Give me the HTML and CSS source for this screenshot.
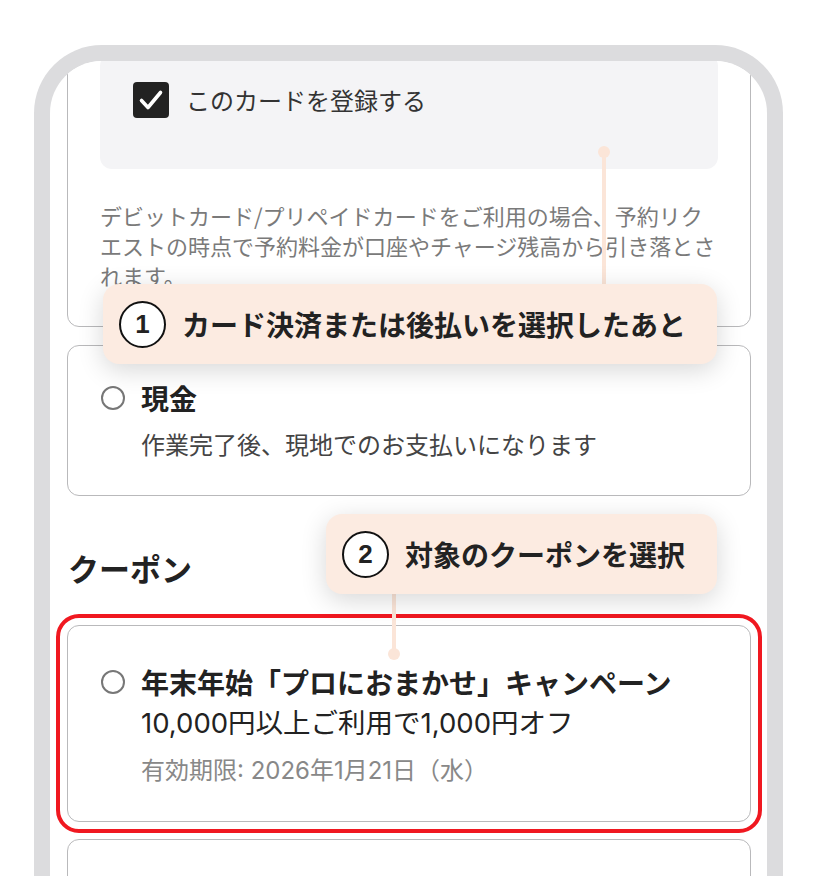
FILE: index.html
```html
<!DOCTYPE html>
<html lang="ja">
<head>
<meta charset="utf-8">
<title>お支払い方法</title>
<link rel="stylesheet" href="styles.css">
</head>
<body>
<div class="phone">
  <div class="screen">
    <div class="card card-first">
      <div class="save-box">
        <label class="check-row">
          <span class="checkbox">
            <svg viewBox="0 0 36 36" width="36" height="36"><path d="M8.5 18.5 L15 25.5 L27.5 10.5" fill="none" stroke="#fff" stroke-width="3.6" stroke-linecap="round" stroke-linejoin="round"/></svg>
          </span>
          <span class="check-label">このカードを登録する</span>
        </label>
      </div>
      <p class="note">デビットカード/プリペイドカードをご利用の場合、予約リクエストの時点で予約料金が口座やチャージ残高から引き落とされます。</p>
    </div>

    <div class="card option">
      <div class="option-head">
        <span class="radio"></span>
        <span class="option-title">現金</span>
      </div>
      <p class="option-sub">作業完了後、現地でのお支払いになります</p>
    </div>

    <h2 class="section-title">クーポン</h2>

    <div class="card option coupon highlighted">
      <div class="option-head">
        <span class="radio"></span>
        <span class="option-title">年末年始「プロにおまかせ」キャンペーン</span>
      </div>
      <p class="coupon-desc">10,000円以上ご利用で1,000円オフ</p>
      <p class="coupon-date">有効期限: 2026年1月21日（水）</p>
    </div>

    <div class="card option next-card"></div>

    <div class="connector connector-1"><span class="dot"></span></div>
    <div class="connector connector-2"><span class="dot"></span></div>

    <div class="callout callout-1">
      <span class="step">1</span>
      <span class="callout-text">カード決済または後払いを選択したあと</span>
    </div>
    <div class="callout callout-2">
      <span class="step">2</span>
      <span class="callout-text">対象のクーポンを選択</span>
    </div>
  </div>
</div>
</body>
</html>
```

FILE: styles.css
```css
* { box-sizing: border-box; }

html, body {
  margin: 0;
  padding: 0;
  background: #ffffff;
  overflow: hidden;
}

body {
  font-family: "Noto Sans CJK JP", "Noto Sans", sans-serif;
  color: #222;
}

.phone {
  margin: 45px 35px 0 34px;
  height: 860px;
  border: 16px solid #dcdcde;
  border-bottom: 0;
  border-radius: 68px 68px 0 0;
  background: #fff;
}

.screen {
  position: relative;
  height: 100%;
  overflow: hidden;
  border-radius: 52px 52px 0 0;
  padding: 0 16px 0 17px;
}

.card {
  border: 1px solid #b9b9bb;
  border-radius: 12px;
  background: #fff;
}

.card-first {
  margin-top: -40px;
  padding: 32px 32px 36px;
}

.save-box {
  background: #f4f4f6;
  border-radius: 12px;
  padding: 28px 32px 51px 33px;
}

.check-row {
  display: flex;
  align-items: center;
  gap: 17px;
}

.checkbox {
  width: 36px;
  height: 36px;
  border-radius: 4px;
  background: #222;
  display: flex;
}

.check-label {
  font-size: 24px;
  color: #333;
  line-height: 36px;
}

.note {
  margin: 31px 0 0;
  font-size: 22px;
  line-height: 30px;
  color: #7a7a7a;
}

.option {
  margin-top: 18px;
  padding: 34px 32px 35px 33px;
}

.option-head {
  display: flex;
  align-items: center;
  gap: 16px;
}

.radio {
  flex: none;
  width: 24px;
  height: 24px;
  border: 2px solid #777;
  border-radius: 50%;
}

.option-title {
  font-size: 28px;
  font-weight: 700;
  line-height: 36px;
  color: #222;
  white-space: nowrap;
}

.option-sub {
  margin: 12px 0 0 40px;
  font-size: 24px;
  line-height: 32px;
  color: #444;
}

.section-title {
  margin: 52px 0 0 1px;
  font-size: 31px;
  font-weight: 700;
  line-height: 40px;
  color: #222;
}

.coupon {
  margin-top: 37px;
  padding: 38px 32px 35px 33px;
}

.highlighted {
  outline: 4px solid #f01820;
  outline-offset: 7px;
}

.coupon-desc {
  margin: 6px 0 0 40px;
  font-family: Inter, "Noto Sans CJK JP", sans-serif;
  font-size: 27.5px;
  line-height: 34px;
  color: #222;
  white-space: nowrap;
}

.coupon-date {
  margin: 16px 0 0 40px;
  font-family: Inter, "Noto Sans CJK JP", sans-serif;
  font-size: 24px;
  line-height: 30px;
  color: #888;
  white-space: nowrap;
}

.next-card {
  margin-top: 17px;
  height: 120px;
}

/* annotation overlays */
.connector {
  position: absolute;
  width: 4px;
  background: #fbe5d8;
}

.connector .dot {
  position: absolute;
  left: -4px;
  width: 12px;
  height: 12px;
  border-radius: 50%;
  background: #fbe5d8;
}

.connector-1 {
  left: 552px;
  top: 91px;
  height: 140px;
}
.connector-1 .dot { top: -6px; }

.connector-2 {
  left: 342px;
  top: 520px;
  height: 73px;
}
.connector-2 .dot { bottom: -6px; }

.callout {
  position: absolute;
  right: 50px;
  height: 80px;
  display: flex;
  align-items: center;
  gap: 16px;
  padding: 0 24px 0 16px;
  background: #fcebe1;
  border-radius: 16px;
  box-shadow: 0 6px 26px rgba(0, 0, 0, 0.16);
}

.callout-1 {
  left: 53px;
  top: 223px;
}

.callout-2 {
  left: 276px;
  top: 453px;
}

.step {
  flex: none;
  width: 47px;
  height: 47px;
  border: 2px solid #111;
  border-radius: 50%;
  background: #fff;
  display: flex;
  align-items: center;
  justify-content: center;
  font-family: "Liberation Sans", "Noto Sans", sans-serif;
  font-weight: 700;
  font-size: 26px;
  color: #222;
}

.callout-text {
  font-size: 28px;
  font-weight: 700;
  line-height: 36px;
  color: #222;
  white-space: nowrap;
}
```
